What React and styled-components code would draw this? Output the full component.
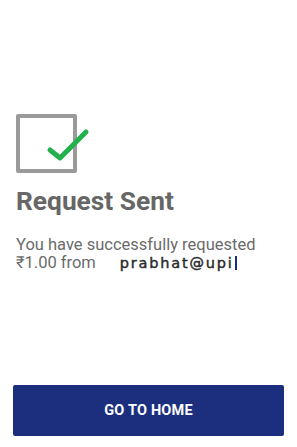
import React from "react";
import styled, { createGlobalStyle } from "styled-components";

const GlobalStyle = createGlobalStyle`
  html, body {
    margin: 0;
    padding: 0;
    background: #ffffff;
  }
  body {
    font-family: Roboto, "Liberation Sans", sans-serif;
  }
`;

const Page = styled.div`
  width: 297px;
  height: 447px;
  display: flex;
  flex-direction: column;
  box-sizing: border-box;
  padding: 114px 0 11px 0;
`;

const Content = styled.div`
  display: flex;
  flex-direction: column;
  padding-left: 16px;
`;

const CheckWrap = styled.div`
  position: relative;
  width: 61px;
  height: 59px;
`;

const Box = styled.div`
  width: 61px;
  height: 59px;
  box-sizing: border-box;
  border: 4px solid #9a9a9a;
  border-radius: 2px;
`;

const Tick = styled.svg`
  position: absolute;
  left: 30px;
  top: 14px;
`;

const Title = styled.h1`
  margin: 13px 0 0 0;
  font-size: 26.3px;
  line-height: 30px;
  font-weight: 700;
  color: #666666;
`;

const Message = styled.p`
  margin: 20px 0 0 0;
  font-size: 16.5px;
  line-height: 18px;
  color: #6b6b6b;
`;

const Vpa = styled.span`
  font-family: "DejaVu Sans", Verdana, sans-serif;
  font-size: 14.5px;
  font-weight: 400;
  -webkit-text-stroke: 0.45px #2a2a2a;
  letter-spacing: 1.8px;
  color: #2a2a2a;
  margin-left: 24px;
`;

const Caret = styled.span`
  display: inline-block;
  width: 2px;
  height: 14px;
  margin-left: 1px;
  background: #1a2a8a;
  vertical-align: -2px;
`;

const Button = styled.button`
  margin: auto 13px 0 13px;
  height: 51px;
  border: none;
  border-radius: 2px;
  background: #1b2f7e;
  color: #ffffff;
  font-family: Roboto, "Liberation Sans", sans-serif;
  font-size: 14.5px;
  font-weight: 700;
  letter-spacing: 0.2px;
  cursor: pointer;
`;

export default function App() {
  return (
    <>
      <GlobalStyle />
      <Page>
        <Content>
          <CheckWrap>
            <Box />
            <Tick width="44" height="34" viewBox="0 0 44 34">
              <polyline
                points="4,22 14,30 40,4"
                fill="none"
                stroke="#22b14c"
                strokeWidth="5"
                strokeLinecap="round"
                strokeLinejoin="round"
              />
            </Tick>
          </CheckWrap>
          <Title>Request Sent</Title>
          <Message>
            You have successfully requested
            <br />
            ₹1.00 from
            <Vpa>prabhat@upi</Vpa>
            <Caret />
          </Message>
        </Content>
        <Button>GO TO HOME</Button>
      </Page>
    </>
  );
}
